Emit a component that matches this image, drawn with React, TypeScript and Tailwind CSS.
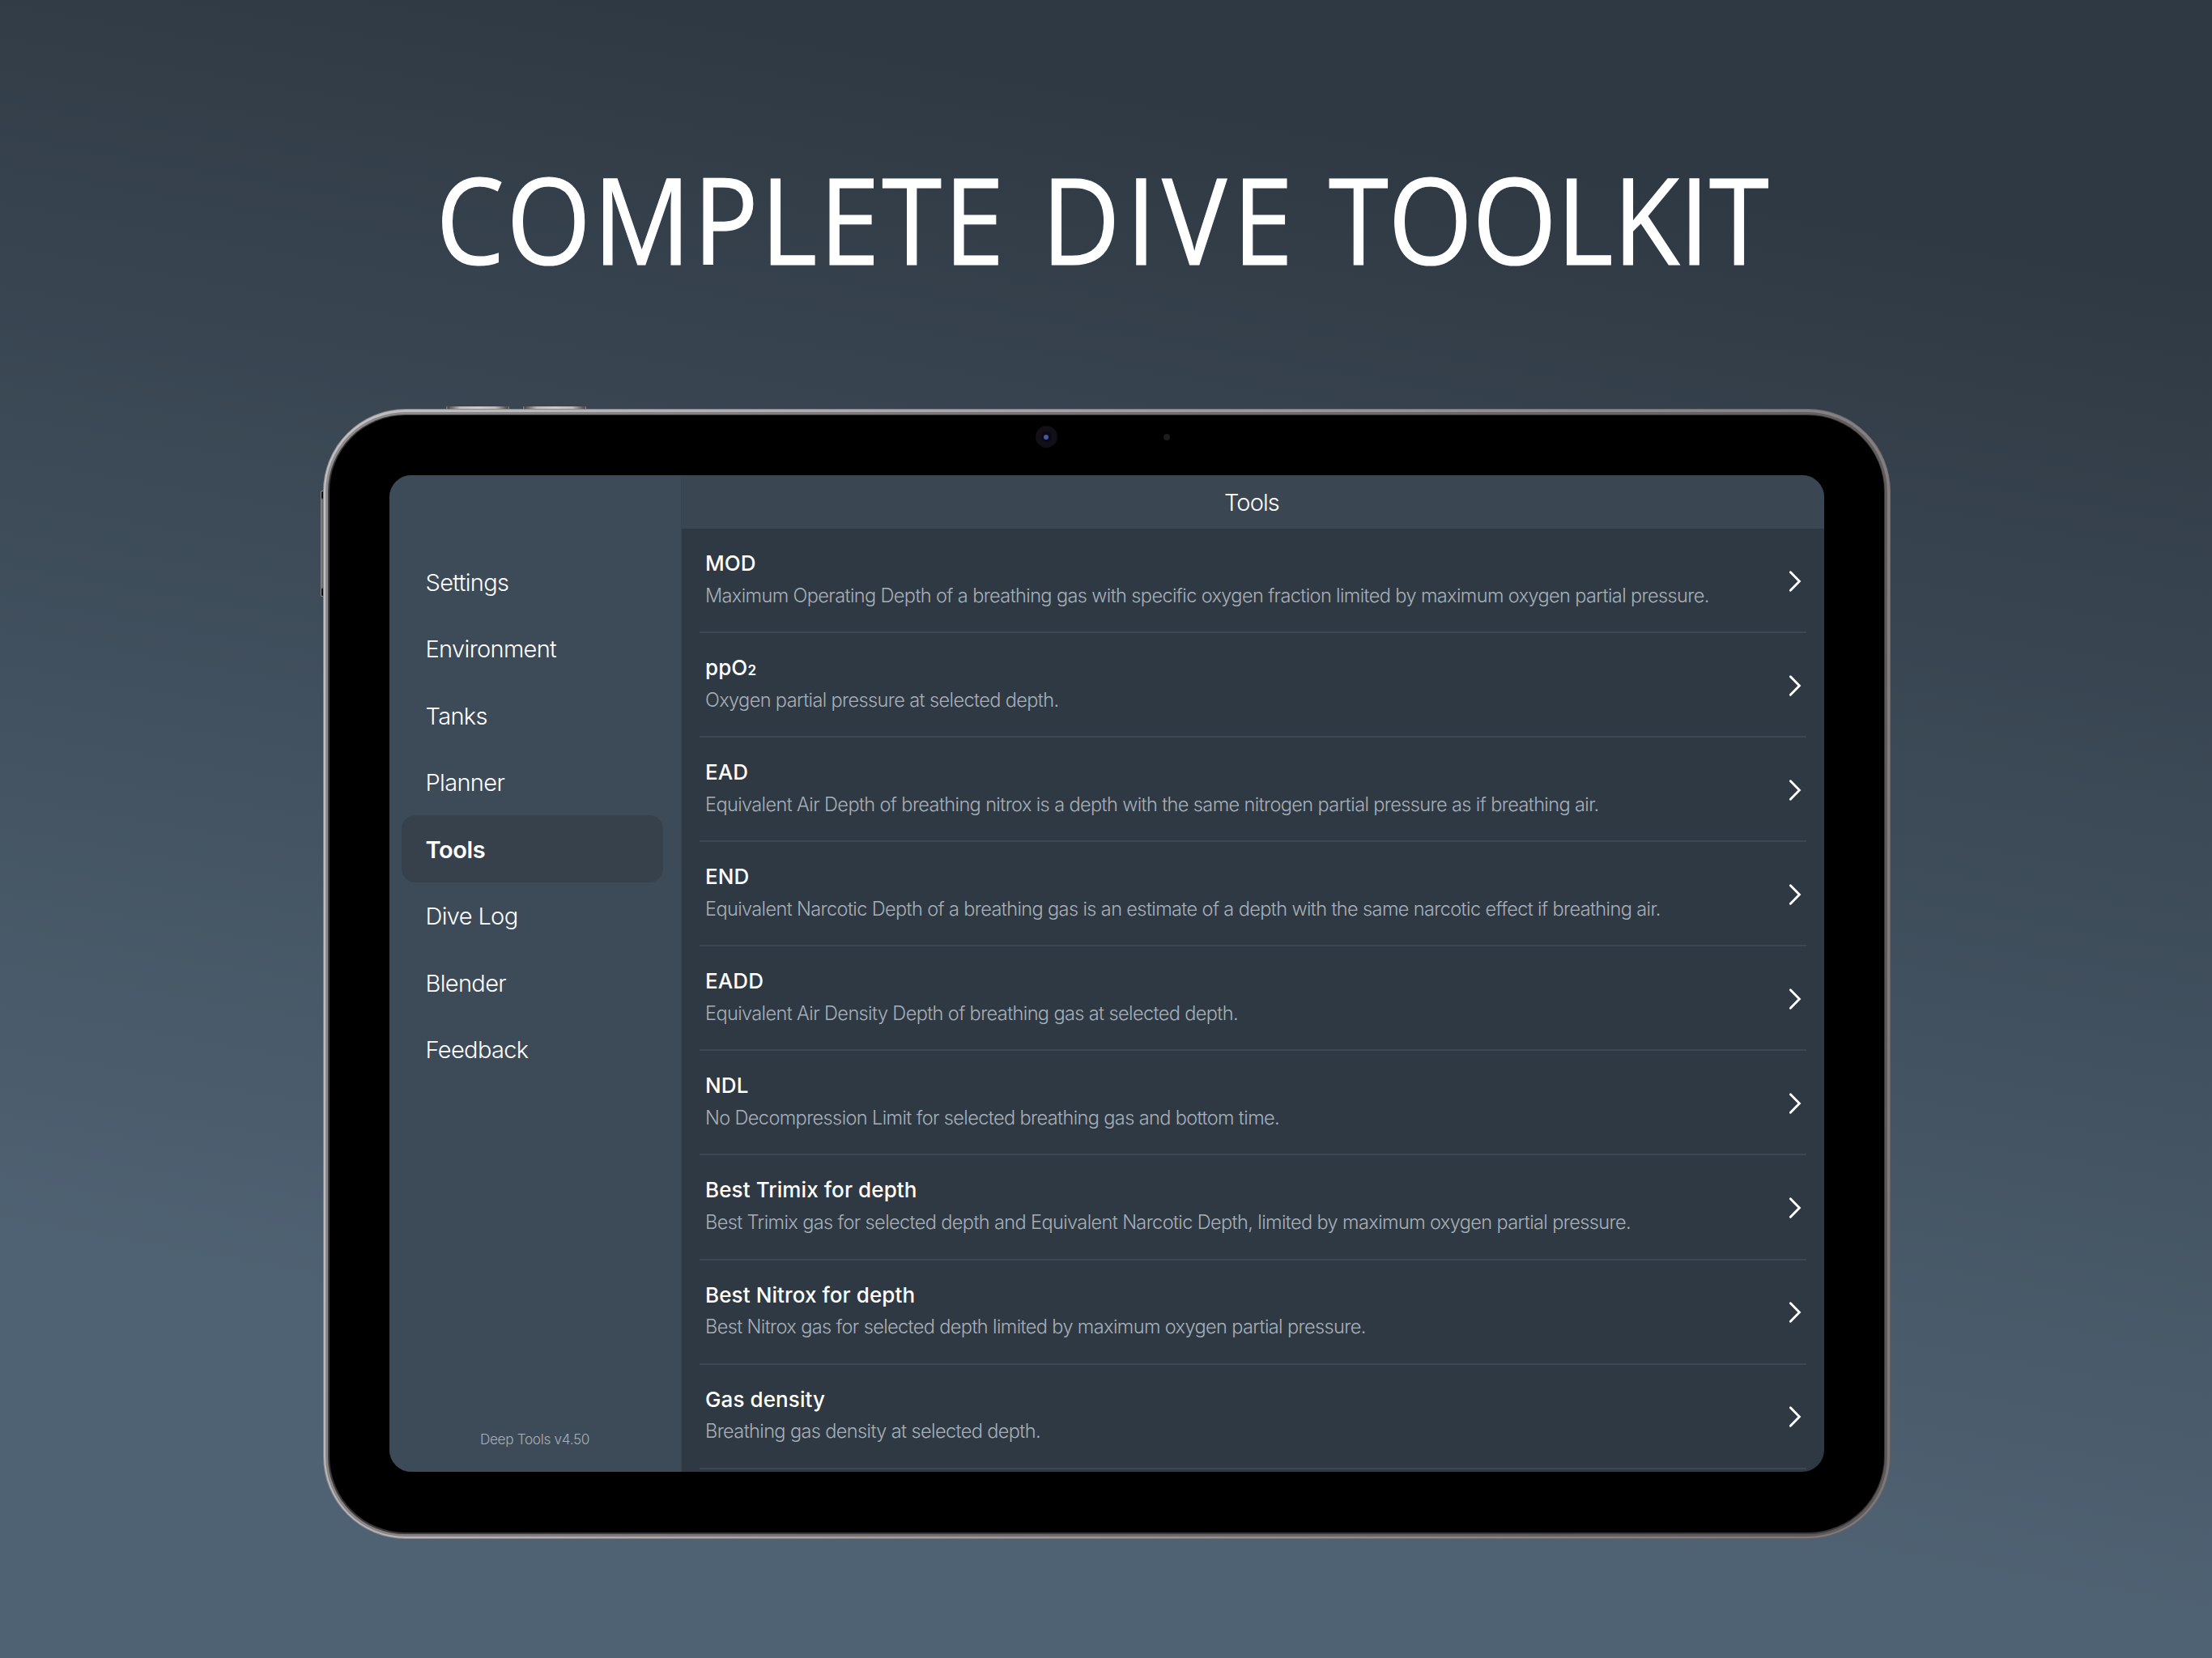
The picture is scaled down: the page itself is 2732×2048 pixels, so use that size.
import type { ReactNode } from "react";

const NAV = ["Settings", "Environment", "Tanks", "Planner", "Tools", "Dive Log", "Blender", "Feedback"];
const ACTIVE = "Tools";

type Tool = { title: ReactNode; text: string };

const TOOLS: Tool[] = [
  {
    title: "MOD",
    text: "Maximum Operating Depth of a breathing gas with specific oxygen fraction limited by maximum oxygen partial pressure.",
  },
  {
    title: (
      <>
        ppO<span className="text-[17px] leading-none font-semibold">2</span>
      </>
    ),
    text: "Oxygen partial pressure at selected depth.",
  },
  {
    title: "EAD",
    text: "Equivalent Air Depth of breathing nitrox is a depth with the same nitrogen partial pressure as if breathing air.",
  },
  {
    title: "END",
    text: "Equivalent Narcotic Depth of a breathing gas is an estimate of a depth with the same narcotic effect if breathing air.",
  },
  { title: "EADD", text: "Equivalent Air Density Depth of breathing gas at selected depth." },
  { title: "NDL", text: "No Decompression Limit for selected breathing gas and bottom time." },
  {
    title: "Best Trimix for depth",
    text: "Best Trimix gas for selected depth and Equivalent Narcotic Depth, limited by maximum oxygen partial pressure.",
  },
  {
    title: "Best Nitrox for depth",
    text: "Best Nitrox gas for selected depth limited by maximum oxygen partial pressure.",
  },
  { title: "Gas density", text: "Breathing gas density at selected depth." },
];

function Chevron() {
  return (
    <svg width="18" height="28" viewBox="0 0 18 28" fill="none" className="mt-[2px] shrink-0">
      <path d="M2.4 2.8 L13.4 14 L2.4 25.2" stroke="white" strokeWidth="2.9" strokeLinecap="round" strokeLinejoin="miter" />
    </svg>
  );
}

function Sidebar() {
  return (
    <aside className="flex w-[361px] shrink-0 flex-col border-r border-[#37434e] bg-[#3d4a57] pt-[90px]">
      <nav className="flex flex-col pl-[15px] pr-[22px]">
        {NAV.map((label) => (
          <a
            key={label}
            className={
              label === ACTIVE
                ? "flex h-[82.55px] items-center rounded-[17px] bg-[#36414c] pt-[2px] pl-[30px] text-[29px] font-semibold tracking-[-0.4px]"
                : "flex h-[82.55px] items-center pt-[2px] pl-[30px] text-[29px] font-light tracking-[-0.65px]"
            }
          >
            {label}
          </a>
        ))}
      </nav>
      <p className="mt-auto pb-[28px] text-center text-[17.2px] leading-[24px] font-light tracking-[-0.32px] text-[#a6b0ba]">
        Deep Tools v4.50
      </p>
    </aside>
  );
}

function ToolRow({ title, text }: Tool) {
  return (
    <li className="ml-[22px] mr-[22px] flex h-[129.08px] items-center border-b-2 border-[#3a4855] pl-[7.5px] pr-[4px]">
      <div className="flex flex-1 flex-col self-start pt-[26px]">
        <h2 className="h-[34px] text-[26px] leading-[34px] font-medium tracking-[0.1px]">{title}</h2>
        <p className="mt-[5.5px] text-[23.5px] leading-[34px] font-light tracking-[-0.61px] whitespace-nowrap text-[#a6afb8]">
          {text}
        </p>
      </div>
      <Chevron />
    </li>
  );
}

function Screen() {
  return (
    <div className="flex h-[1231px] w-[1772px] overflow-hidden rounded-[27px] bg-[#2f3943] text-white">
      <Sidebar />
      <main className="flex flex-1 flex-col">
        <header className="flex h-[66px] shrink-0 items-center justify-center bg-[#3a4651] pt-[2px] pr-[2px] text-[29px] font-light tracking-[-0.9px]">
          Tools
        </header>
        <ul className="flex flex-col">
          {TOOLS.map((tool) => (
            <ToolRow key={tool.text} {...tool} />
          ))}
        </ul>
      </main>
    </div>
  );
}

function Tablet() {
  return (
    <div className="relative h-[1396px] w-[1936px]">
      {/* hardware buttons */}
      <div className="absolute -top-[3px] left-[152px] h-[6px] w-[78px] rounded-t-[1px] bg-[linear-gradient(90deg,#8a8786,#4b4a4a_3%,#bdbab6_22%,#cfccc8_50%,#bdbab6_78%,#4b4a4a_97%,#8a8786)]" />
      <div className="absolute -top-[3px] left-[247px] h-[6px] w-[78px] rounded-t-[1px] bg-[linear-gradient(90deg,#8a8786,#4b4a4a_3%,#bdbab6_22%,#cfccc8_50%,#bdbab6_78%,#4b4a4a_97%,#8a8786)]" />
      <div className="absolute top-[101px] -left-[3px] h-[131px] w-[6px] rounded-l-[2px] border-y border-l border-[#8d8f92] bg-[linear-gradient(180deg,#0c0c0d_6%,#6b6c6f_8%,#6b6c6f_92%,#0c0c0d_94%)]" />

      <div className="relative h-full rounded-[102px] bg-[linear-gradient(110deg,#8f8b8e,#7f7b7d_50%,#625e60)] p-px">
        <div className="h-full rounded-[101px] bg-[linear-gradient(100deg,#c4c1c3,#a09a9d_50%,#7b7678)] p-[2.5px]">
          <div className="h-full rounded-[98.5px] bg-[linear-gradient(100deg,#8f8c8f,#716d70_50%,#5d595b)] p-[3px]">
            <div className="h-full rounded-[95.5px] bg-[#3b393a] p-[1.5px]">
              <div className="h-full rounded-[94px] bg-black pt-[74px] pl-[74px]">
                <Screen />
              </div>
            </div>
          </div>
        </div>
      </div>

      {/* front camera and microphone */}
      <div className="absolute top-[21px] left-[880px] flex size-[27px] items-center justify-center rounded-full bg-[#130f16]">
        <div className="flex size-[13px] items-center justify-center rounded-full bg-[#080b14]">
          <div className="size-[6px] rounded-full bg-[#4558a4]" />
        </div>
      </div>
      <div className="absolute top-[31px] left-[1038.5px] size-[8px] rounded-full bg-[#1c1c1c]" />
    </div>
  );
}

export default function App() {
  return (
    <div className="flex h-[2048px] w-[2732px] flex-col items-center overflow-hidden bg-[linear-gradient(190deg,#2f3943_14%,#4f6273_80%)] font-['Inter','Liberation_Sans',sans-serif]">
      <h1 className="mt-[170px] mr-[10px] flex h-[335px] origin-center scale-x-[0.9] font-['Open_Sans',sans-serif] text-[149px] leading-[200px] font-normal whitespace-nowrap text-white [-webkit-text-stroke:1.2px_white]">
        <span className="mr-[48px] tracking-[3px]">COMPLETE</span>
        <span className="mr-[41px] tracking-[8px]">DIVE</span>
        <span className="tracking-[-0.4px]">TOOLKIT</span>
      </h1>
      <div className="pl-px">
        <Tablet />
      </div>
    </div>
  );
}
